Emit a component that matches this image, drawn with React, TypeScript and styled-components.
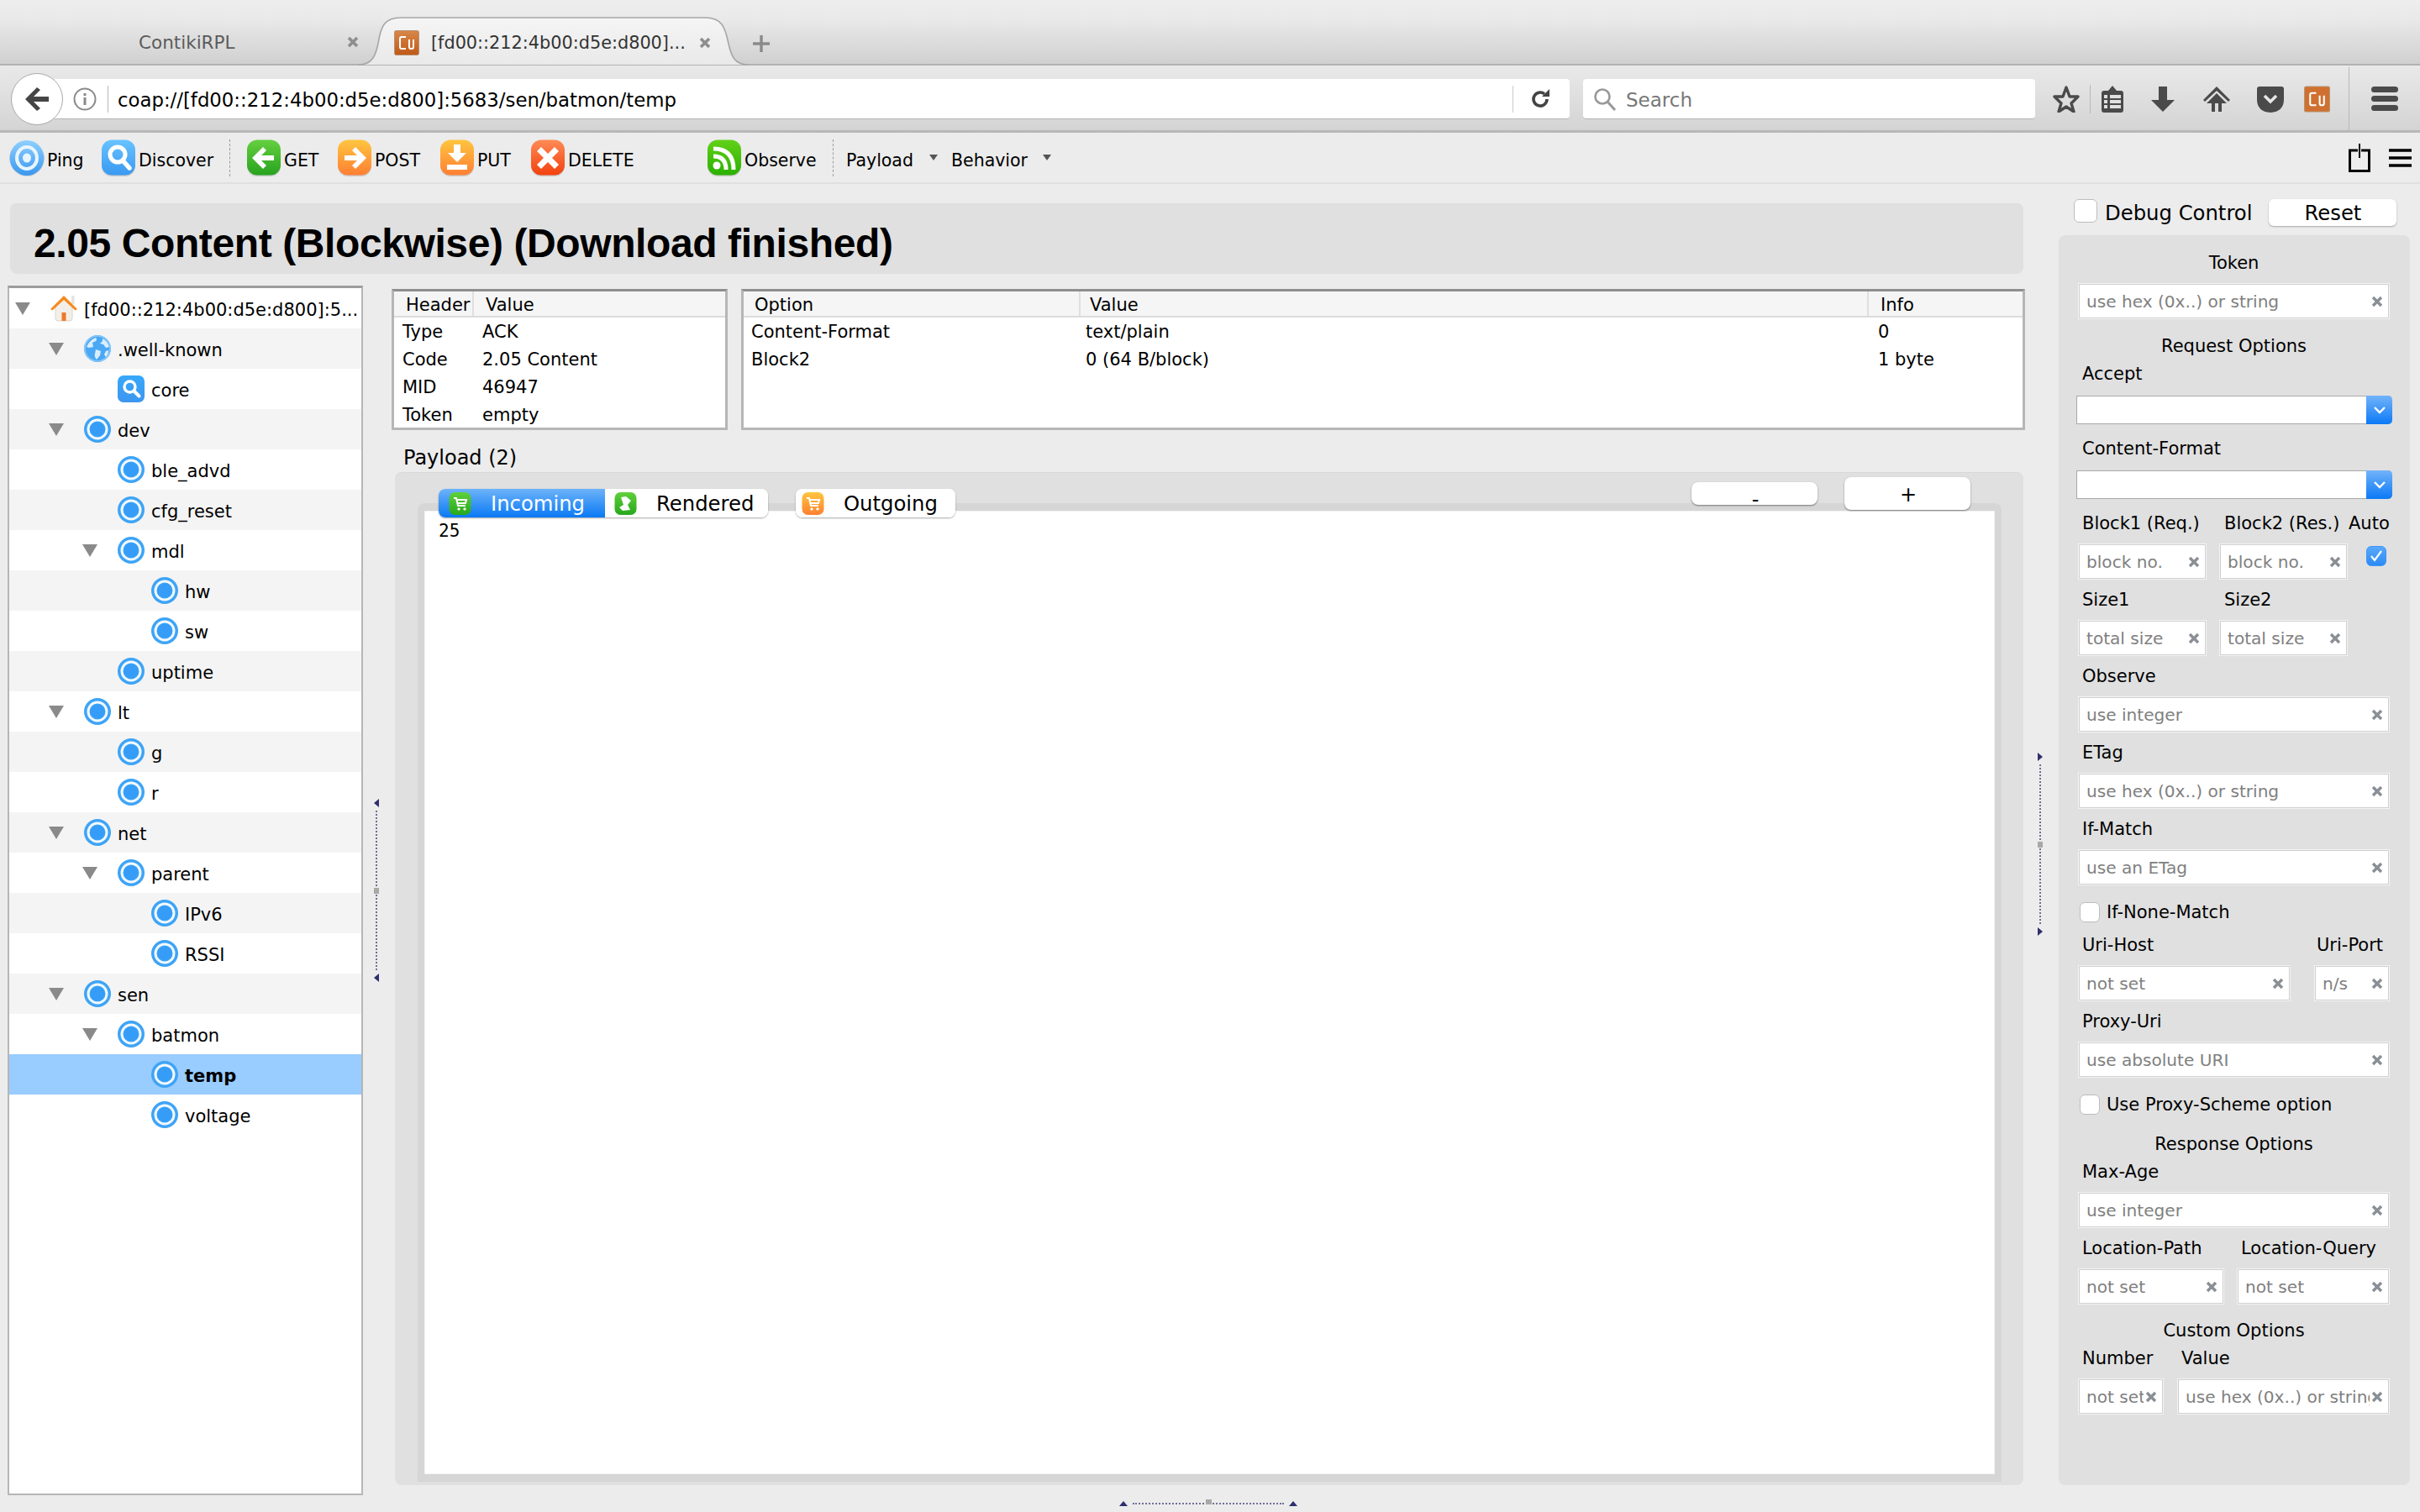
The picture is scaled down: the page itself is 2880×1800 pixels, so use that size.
import React from "react";
import styled, { createGlobalStyle } from "styled-components";

const FONT = `"DejaVu Sans", "Liberation Sans", sans-serif`;

const Global = createGlobalStyle`
  html, body { margin: 0; padding: 0; width: 2880px; height: 1800px; overflow: hidden; background: #ececec; }
  body { font-family: ${FONT}; color: #000; }
  * { box-sizing: border-box; }
`;

const Page = styled.div`
  width: 2880px;
  height: 1800px;
  display: flex;
  flex-direction: column;
  background: #ececec;
`;

/* ---------- browser tab strip ---------- */
const TabBar = styled.div`
  height: 78px;
  flex: none;
  display: flex;
  align-items: flex-end;
  background: linear-gradient(#eeeeee 0%, #e9e9e9 30%, #d0d0d0 100%);
  border-bottom: 2px solid #b2b2b2;
  position: relative;
`;
const InactiveTab = styled.div`
  width: 427px;
  height: 56px;
  display: flex;
  align-items: center;
  padding-left: 165px;
  padding-top: 4px;
  font-size: 21.5px;
  color: #5c5c5c;
`;
const TabClose = styled.svg`
  width: 16px;
  height: 18px;
  flex: none;
`;
const InactiveClose = styled(TabClose)`
  margin-left: auto;
  margin-right: -1px;
`;
const ActiveTab = styled.div`
  width: 463px;
  height: 58px;
  margin-bottom: -2px;
  position: relative;
  display: flex;
  align-items: center;
  padding-left: 42px;
  padding-top: 4px;
  font-size: 20.8px;
  color: #333;
`;
const TabShape = styled.svg`
  position: absolute;
  left: 0;
  top: 0;
`;
const TabTitle = styled.span`
  position: relative;
  margin-left: 14px;
  width: 316px;
  white-space: nowrap;
  overflow: hidden;
`;
const ActiveClose = styled(TabClose)`
  position: relative;
  margin-left: 2px;
`;
const GlyphSvg = styled.svg`
  position: relative;
  flex: none;
  display: block;
`;
const NewTab = styled.svg`
  margin: 0 0 13px 5px;
`;

/* ---------- url bar ---------- */
const NavBar = styled.div`
  height: 80px;
  flex: none;
  display: flex;
  align-items: center;
  padding-left: 13px;
  padding-top: 3px;
  background: linear-gradient(#e9e9e9, #d4d4d4);
  border-bottom: 3px solid #b8b8b8;
  position: relative;
`;
const BackButton = styled.div`
  width: 62px;
  height: 62px;
  flex: none;
  border-radius: 50%;
  background: #fff;
  border: 1.5px solid #a9a9a9;
  display: flex;
  align-items: center;
  justify-content: center;
  position: relative;
  z-index: 1;
`;
const UrlField = styled.div`
  width: 1803px;
  height: 48px;
  margin-left: -10px;
  background: #fff;
  border-bottom: 1px solid #b4b4b4;
  border-radius: 0 4px 4px 0;
  display: flex;
  align-items: center;
  padding-left: 22px;
  font-size: 22.8px;
  color: #000;
`;
const UrlDivider = styled.i`
  width: 1px;
  height: 32px;
  background: #ccc;
  flex: none;
`;
const UrlText = styled.span`
  margin-left: 11px;
  padding-top: 3px;
  white-space: nowrap;
`;
const UrlTail = styled.div`
  margin-left: auto;
  display: flex;
  align-items: center;
  gap: 20px;
  padding-right: 23px;
`;
const SearchField = styled.div`
  width: 538px;
  height: 48px;
  margin-left: 16px;
  background: #fff;
  border-bottom: 1px solid #b4b4b4;
  border-radius: 4px;
  display: flex;
  align-items: center;
  padding-left: 12px;
  font-size: 23px;
  color: #777;
  gap: 11px;
`;
const SearchText = styled.span`
  padding-top: 3px;
`;
const NavIcon = styled.svg<{ $ml: number }>`
  flex: none;
  margin-left: ${(p) => p.$ml}px;
  display: block;
`;
const NavSep = styled.i<{ $ml: number; $h: number }>`
  flex: none;
  width: 1px;
  height: ${(p) => p.$h}px;
  background: #b8b8b8;
  margin-left: ${(p) => p.$ml}px;
`;

/* ---------- app toolbar ---------- */
const Toolbar = styled.div`
  height: 61px;
  flex: none;
  display: flex;
  align-items: center;
  padding: 0 10px 0 11px;
  border-bottom: 2px solid #e0e0e0;
  font-size: 20.5px;
  background: #ececec;
`;
const ToolButton = styled.div<{ $w: number }>`
  width: ${(p) => p.$w}px;
  flex: none;
  display: flex;
  align-items: center;
  gap: 3px;
  white-space: nowrap;
`;
const ToolText = styled.span`
  padding-top: 6px;
`;
const ToolSep = styled.i<{ $mr: number }>`
  flex: none;
  width: 0;
  height: 44px;
  border-left: 1px dashed #9a9a9a;
  margin-right: ${(p) => p.$mr}px;
`;
const MenuButton = styled.div<{ $w: number; $gap: number }>`
  flex: none;
  width: ${(p) => p.$w}px;
  display: flex;
  align-items: center;
  gap: ${(p) => p.$gap}px;
  padding-top: 6px;
`;
const MenuCaret = styled.i`
  width: 0;
  height: 0;
  border-left: 5px solid transparent;
  border-right: 5px solid transparent;
  border-top: 7px solid #555;
  margin-top: -6px;
`;
const ToolbarRight = styled.div`
  margin-left: auto;
  display: flex;
  align-items: center;
  gap: 22px;
`;

/* ---------- body ---------- */
const Body = styled.div`
  flex: 1;
  min-height: 0;
  display: flex;
  padding-left: 9px;
`;
const MainColumn = styled.div`
  width: 2401px;
  flex: none;
  display: flex;
  flex-direction: column;
`;
const Heading = styled.h1`
  margin: 23px 2px 0 3px;
  height: 84px;
  flex: none;
  background: #e0e0e0;
  border-radius: 8px;
  border-top: 1px solid #dcdcdc;
  display: flex;
  align-items: center;
  padding: 10px 0 0 28px;
  font-family: "Liberation Sans", Arial, sans-serif;
  font-weight: 700;
  font-size: 48px;
  letter-spacing: -0.4px;
`;
const WorkRow = styled.div`
  flex: 1;
  min-height: 0;
  display: flex;
  margin-top: 14px;
`;

/* ---------- tree ---------- */
const Tree = styled.div`
  width: 423px;
  flex: none;
  margin-bottom: 20px;
  background: #fff;
  border: 2px solid #b6b6b6;
  border-top: 3px solid #9c9c9c;
`;
const TreeRow = styled.div<{ $depth: number; $shade: boolean; $selected: boolean }>`
  height: 48px;
  display: flex;
  align-items: center;
  padding-left: ${(p) => 7 + p.$depth * 40}px;
  font-size: 21px;
  white-space: nowrap;
  font-weight: ${(p) => (p.$selected ? 700 : 400)};
  background: ${(p) => (p.$selected ? "#99ccff" : p.$shade ? "#f4f4f4" : "#fff")};
`;
const TreeLabel = styled.span`
  padding-top: 3px;
`;
const ArrowSlot = styled.span`
  width: 18px;
  height: 14px;
  flex: none;
  margin-right: 24px;
  display: flex;
`;
const TreeArrow = styled.i`
  width: 0;
  height: 0;
  border-left: 9px solid transparent;
  border-right: 9px solid transparent;
  border-top: 15px solid #8a8a8a;
`;
const TreeIcon = styled.svg`
  flex: none;
  margin-right: 8px;
  display: block;
`;

/* ---------- splitters ---------- */
const VSplitter = styled.div`
  flex: none;
  display: flex;
  flex-direction: column;
  align-items: center;
  justify-content: center;
  gap: 4px;
`;
const TreeSplitter = styled(VSplitter)`
  width: 34px;
  margin-bottom: 20px;
  padding-right: 2px;
`;
const SideSplitter = styled(VSplitter)`
  width: 40px;
  padding-bottom: 9px;
  padding-right: 4px;
`;
const DotsV = styled.i`
  width: 0;
  height: 190px;
  border-left: 2px dotted #6f6f96;
  position: relative;
  &::after {
    content: "";
    position: absolute;
    left: -4px;
    top: 92px;
    width: 6px;
    height: 7px;
    background: #a8a8a8;
  }
`;
const DotsH = styled.i`
  width: 180px;
  height: 0;
  border-top: 2px dotted #6f6f96;
  position: relative;
  &::after {
    content: "";
    position: absolute;
    left: 87px;
    top: -6px;
    width: 7px;
    height: 6px;
    background: #a8a8a8;
  }
`;
const HandleRow = styled.div`
  flex: none;
  height: 12px;
  margin-top: 16px;
  display: flex;
  align-items: center;
  justify-content: center;
  gap: 6px;
`;
const Tri = styled.i<{ $dir: "up" | "left" | "right" }>`
  width: 0;
  height: 0;
  ${(p) =>
    p.$dir === "up"
      ? "border-left:5px solid transparent;border-right:5px solid transparent;border-bottom:6px solid #2f2f6e;"
      : p.$dir === "left"
      ? "border-top:5px solid transparent;border-bottom:5px solid transparent;border-right:6px solid #2f2f6e;"
      : "border-top:5px solid transparent;border-bottom:5px solid transparent;border-left:6px solid #2f2f6e;"}
`;

/* ---------- centre ---------- */
const Center = styled.div`
  flex: 1;
  min-width: 0;
  display: flex;
  flex-direction: column;
  padding-top: 4px;
`;
const TablesRow = styled.div`
  display: flex;
  gap: 16px;
  height: 168px;
  flex: none;
`;
const InfoBox = styled.div<{ $w?: number }>`
  ${(p) => (p.$w ? `width:${p.$w}px;flex:none;` : "flex:1;min-width:0;")}
  background: #fff;
  border: 3px solid #b6b6b6;
  border-top-color: #8e8e8e;
  font-size: 21px;
`;
const InfoHead = styled.div<{ $cols: string }>`
  display: grid;
  grid-template-columns: ${(p) => p.$cols};
  height: 31px;
  background: #f5f5f5;
  border-bottom: 2px solid #dcdcdc;
  align-items: center;
`;
const InfoHeadCell = styled.div<{ $pad: number; $line?: boolean }>`
  height: 100%;
  display: flex;
  align-items: center;
  padding-top: 3px;
  padding-left: ${(p) => p.$pad}px;
  ${(p) => (p.$line ? "border-right: 2px solid #dfdfdf;" : "")}
`;
const InfoRow = styled.div<{ $cols: string; $pad: number }>`
  display: grid;
  grid-template-columns: ${(p) => p.$cols};
  height: 33px;
  align-items: center;
  padding-left: ${(p) => p.$pad}px;
`;
const PayloadLabel = styled.div`
  height: 33px;
  flex: none;
  margin: 16px 0 1px 14px;
  display: flex;
  align-items: center;
  font-size: 24px;
`;
const PayloadPanel = styled.div`
  height: 1206px;
  flex: none;
  margin: 0 2px 0 4px;
  padding: 36px 26px 4px 27px;
  background: #e0e0e0;
  border-top: 1px solid #d8d8d8;
  border-radius: 8px;
  position: relative;
`;
const PayloadWell = styled.div`
  height: 100%;
  padding: 9px 8px;
  background: #d6d6d6;
  border-radius: 8px 8px 0 0;
`;
const PayloadBody = styled.pre`
  margin: 0;
  height: 100%;
  background: #fff;
  border: 1px solid #f2f2f2;
  padding: 11px 16px;
  font-family: "DejaVu Sans Mono", "Liberation Mono", monospace;
  font-size: 21px;
  line-height: 24px;
`;
const TabStrip = styled.div`
  position: absolute;
  left: 52px;
  top: 19px;
  display: flex;
  gap: 33px;
`;
const SegGroup = styled.div`
  display: flex;
  height: 34px;
  border-radius: 8px;
  overflow: hidden;
  box-shadow: 0 1px 2px rgba(0, 0, 0, 0.35);
  background: #fff;
`;
const Seg = styled.div<{ $w: number; $active?: boolean; $iconPad: number }>`
  width: ${(p) => p.$w}px;
  display: flex;
  align-items: center;
  padding-left: ${(p) => p.$iconPad}px;
  gap: 23px;
  font-size: 24.3px;
  color: ${(p) => (p.$active ? "#fff" : "#000")};
  background: ${(p) => (p.$active ? "linear-gradient(#6db3f9, #0a79f5)" : "#fff")};
`;
const ZoomButtons = styled.div`
  position: absolute;
  right: 63px;
  top: 5px;
  display: flex;
  align-items: center;
  gap: 32px;
  height: 39px;
`;
const ZoomButton = styled.div<{ $h: number; $shift: number }>`
  width: 150px;
  height: ${(p) => p.$h}px;
  background: #fff;
  border-radius: 8px;
  box-shadow: 0 1px 2px rgba(0, 0, 0, 0.45);
  display: flex;
  align-items: center;
  justify-content: center;
  padding: ${(p) => p.$shift}px 0 0 2px;
  font-size: 24px;
  line-height: 1;
`;

/* ---------- right side panel ---------- */
const SideColumn = styled.div`
  width: 418px;
  flex: none;
  display: flex;
  flex-direction: column;
`;
const DebugRow = styled.div`
  height: 61px;
  flex: none;
  display: flex;
  align-items: flex-start;
  padding: 18px 0 0 18px;
  font-size: 24.3px;
`;
const DebugLabel = styled.span`
  margin-left: 9px;
  line-height: 33px;
`;
const ResetButton = styled.div`
  width: 152px;
  height: 32px;
  margin-left: 20px;
  padding-top: 1px;
  background: #fff;
  border-radius: 6px;
  box-shadow: 0 1px 2px rgba(0, 0, 0, 0.3);
  display: flex;
  align-items: center;
  justify-content: center;
`;
const Check = styled.div<{ $size: number; $on?: boolean }>`
  width: ${(p) => p.$size}px;
  height: ${(p) => p.$size}px;
  flex: none;
  border-radius: 6px;
  background: ${(p) => (p.$on ? "linear-gradient(#5aa9fb, #2b8af5)" : "#fff")};
  border: 1px solid ${(p) => (p.$on ? "#3f95f5" : "#bdbdbd")};
  display: flex;
  align-items: center;
  justify-content: center;
`;
const SidePanel = styled.div`
  height: 1488px;
  flex: none;
  padding: 16px 25px 0 24px;
  background: #e0e0e0;
  border-radius: 8px;
  font-size: 21px;
`;
const LabelRow = styled.div<{ $cols?: string; $mt: number }>`
  display: grid;
  grid-template-columns: ${(p) => p.$cols || "1fr"};
  height: 33px;
  align-items: center;
  padding-left: 4px;
  margin-top: ${(p) => p.$mt}px;
  white-space: nowrap;
`;
const SectionTitle = styled.div<{ $mt: number }>`
  height: 33px;
  display: flex;
  align-items: center;
  justify-content: center;
  margin-top: ${(p) => p.$mt}px;
`;
const FieldRow = styled.div<{ $cols?: string; $gap?: number }>`
  display: grid;
  grid-template-columns: ${(p) => p.$cols || "1fr"};
  column-gap: ${(p) => p.$gap ?? 0}px;
  margin-top: 9px;
`;
const Field = styled.div`
  height: 41px;
  background: #fff;
  border: 1px solid #cfcfcf;
  box-shadow: 0 0 0 1px #f4f4f4;
  display: flex;
  align-items: center;
  padding: 0 6px 0 8px;
  min-width: 0;
`;
const Placeholder = styled.span`
  flex: 1;
  min-width: 0;
  overflow: hidden;
  white-space: nowrap;
  padding-top: 1px;
  font-size: 20.1px;
  color: #808080;
`;
const ClearIcon = styled.svg`
  flex: none;
  display: block;
  margin-left: 2px;
`;
const SelectBox = styled.div`
  height: 34px;
  margin: 10px -4px 0 -3px;
  background: #fff;
  border: 1px solid #a9a9a9;
  border-right: 0;
  border-radius: 0 5px 5px 0;
  display: flex;
  justify-content: flex-end;
`;
const SelectArrow = styled.div`
  width: 31px;
  margin: -1px 0;
  background: linear-gradient(#72b3fa, #0b79f6);
  border-radius: 0 5px 5px 0;
  display: flex;
  align-items: center;
  justify-content: center;
`;
const CheckRow = styled.div<{ $mt: number }>`
  height: 33px;
  display: flex;
  align-items: center;
  gap: 8px;
  padding-left: 1px;
  margin-top: ${(p) => p.$mt}px;
`;
const AutoCell = styled.div`
  padding: 2px 0 0 6px;
`;

/* ---------- drawings ---------- */
const Clear = () => (
  <ClearIcon width="14" height="14" viewBox="0 0 14 14">
    <path d="M2 2l10 10M12 2L2 12" stroke="#8a8f96" strokeWidth="3.4" />
  </ClearIcon>
);

const CuIcon = () => (
  <GlyphSvg width={30} height={30} viewBox="0 0 30 30">
    <defs>
      <linearGradient id="cuG" x1="0" y1="0" x2="0" y2="1">
        <stop offset="0" stopColor="#d8874a" />
        <stop offset="1" stopColor="#c05a18" />
      </linearGradient>
    </defs>
    <rect x="0.5" y="0.5" width="29" height="29" rx="2" fill="url(#cuG)" stroke="#b8926e" />
    <path d="M14 8h-5q-2 0-2 2v10q0 2 2 2h5" fill="none" stroke="#fff" strokeWidth="2" />
    <path d="M18 11v9q0 2 2 2h1q2 0 2-2v-9" fill="none" stroke="#fff" strokeWidth="2" />
  </GlyphSvg>
);

const glossStops: Record<string, [string, string]> = {
  green: ["#66cf3f", "#27a31f"],
  orange: ["#ffc53f", "#ff7f33"],
  red: ["#ff8b55", "#f2410f"],
  blue: ["#67c3ff", "#3a99f2"],
  rss: ["#62d11a", "#2bb000"],
};

const Glossy = ({ id, tone, children }: { id: string; tone: string; children: React.ReactNode }) => (
  <GlyphSvg width="42" height="44" viewBox="0 0 42 44">
    <defs>
      <linearGradient id={id} x1="0" y1="0" x2="0" y2="1">
        <stop offset="0" stopColor={glossStops[tone][0]} />
        <stop offset="1" stopColor={glossStops[tone][1]} />
      </linearGradient>
    </defs>
    <rect x="1" y="2" width="40" height="42" rx="12" fill="#000" opacity="0.14" />
    <rect x="1" y="0.5" width="40" height="42" rx="12" fill={`url(#${id})`} />
    {children}
  </GlyphSvg>
);

const PingIcon = () => (
  <GlyphSvg width="42" height="44" viewBox="0 0 42 44">
    <defs>
      <linearGradient id="pingG" x1="0" y1="0" x2="0" y2="1">
        <stop offset="0" stopColor="#8fd0ff" />
        <stop offset="1" stopColor="#3a97ee" />
      </linearGradient>
    </defs>
    <ellipse cx="21" cy="23" rx="20.5" ry="21" fill="#000" opacity="0.12" />
    <ellipse cx="21" cy="22" rx="20.5" ry="21" fill="url(#pingG)" />
    <ellipse cx="21" cy="22" rx="12" ry="13" fill="none" stroke="#e8f5ff" strokeWidth="4" />
    <ellipse cx="21" cy="22" rx="5" ry="5.5" fill="#e8f5ff" />
  </GlyphSvg>
);

const ResourceIcon = () => (
  <TreeIcon width="32" height="32" viewBox="0 0 32 32">
    <circle cx="16" cy="16" r="16" fill="#3ea4f6" />
    <circle cx="16" cy="16" r="11" fill="none" stroke="#f2f9ff" strokeWidth="3" />
    <circle cx="16" cy="16" r="8.4" fill="#359df7" />
  </TreeIcon>
);

const HomeIcon = () => (
  <TreeIcon width="32" height="32" viewBox="0 0 32 32">
    <rect x="25" y="1" width="3.5" height="10" fill="#e4e4e4" />
    <path d="M6 14v14q0 3 3 3h14q3 0 3-3V14L16 5z" fill="#f2efe9" stroke="#d9d4cc" />
    <path d="M0 17L16 1l16 16-2.5 1.5L16 6 2.5 18.5z" fill="#f58a1f" />
    <rect x="13.5" y="21" width="5" height="10" fill="#ef7a24" />
  </TreeIcon>
);

const GlobeIcon = () => (
  <TreeIcon width="32" height="32" viewBox="0 0 32 32">
    <circle cx="16" cy="16" r="16" fill="#4aa8f4" />
    <path d="M3 14q3-8 11-11 2 2 0 4l-4 2 1 5-5 1zM14 17l6 2-1 5-4 5q-3-3-2-7zM22 4q6 3 8 10l-4 1-3-4-4-1 3-3zM26 19l3-1q0 5-3 8l-2-3z" fill="#d9eefd" />
    <circle cx="16" cy="16" r="15" fill="none" stroke="#8cc9f8" strokeWidth="1.6" />
  </TreeIcon>
);

const CoreIcon = () => (
  <TreeIcon width="32" height="32" viewBox="0 0 32 32">
    <defs>
      <linearGradient id="coreG" x1="0" y1="0" x2="0" y2="1">
        <stop offset="0" stopColor="#36a8fa" />
        <stop offset="1" stopColor="#3d96f0" />
      </linearGradient>
    </defs>
    <rect width="32" height="32" rx="7" fill="url(#coreG)" />
    <circle cx="14.5" cy="13.5" r="6.5" fill="none" stroke="#fff" strokeWidth="3.4" />
    <path d="M19.5 18.5l6 6" stroke="#fff" strokeWidth="4" strokeLinecap="round" />
  </TreeIcon>
);

const Cart = ({ id, top, bottom, shape }: { id: string; top: string; bottom: string; shape?: "render" }) => (
  <GlyphSvg width="27" height="29" viewBox="0 0 27 29">
    <defs>
      <linearGradient id={id} x1="0" y1="0" x2="0" y2="1">
        <stop offset="0" stopColor={top} />
        <stop offset="1" stopColor={bottom} />
      </linearGradient>
    </defs>
    <rect x="0.5" y="1" width="26" height="27" rx="7" fill={`url(#${id})`} />
    {shape === "render" ? (
      <path d="M8 7l6-1 6 5-4 5 3 6-9 1-4-4 5-3z" fill="#fff" />
    ) : (
      <g fill="none" stroke="#fff">
        <path d="M6 8h3l2 9h9" strokeWidth="2" />
        <path d="M10 10h11l-1 4h-9" strokeWidth="2" />
        <circle cx="12" cy="21" r="1.2" fill="#fff" strokeWidth="1" />
        <circle cx="19" cy="21" r="1.2" fill="#fff" strokeWidth="1" />
      </g>
    )}
  </GlyphSvg>
);

const SelectChevron = () => (
  <svg width="16" height="12" viewBox="0 0 16 12">
    <path d="M2 3l6 6 6-6" fill="none" stroke="#fff" strokeWidth="2.4" />
  </svg>
);

/* ---------- data ---------- */
type Node = { label: string; depth: number; open?: boolean; icon?: "home" | "globe" | "core"; selected?: boolean };
const nodes: Node[] = [
  { label: "[fd00::212:4b00:d5e:d800]:5...", depth: 0, open: true, icon: "home" },
  { label: ".well-known", depth: 1, open: true, icon: "globe" },
  { label: "core", depth: 2, icon: "core" },
  { label: "dev", depth: 1, open: true },
  { label: "ble_advd", depth: 2 },
  { label: "cfg_reset", depth: 2 },
  { label: "mdl", depth: 2, open: true },
  { label: "hw", depth: 3 },
  { label: "sw", depth: 3 },
  { label: "uptime", depth: 2 },
  { label: "lt", depth: 1, open: true },
  { label: "g", depth: 2 },
  { label: "r", depth: 2 },
  { label: "net", depth: 1, open: true },
  { label: "parent", depth: 2, open: true },
  { label: "IPv6", depth: 3 },
  { label: "RSSI", depth: 3 },
  { label: "sen", depth: 1, open: true },
  { label: "batmon", depth: 2, open: true },
  { label: "temp", depth: 3, selected: true },
  { label: "voltage", depth: 3 },
];

const iconFor = (n: Node) =>
  n.icon === "home" ? <HomeIcon /> : n.icon === "globe" ? <GlobeIcon /> : n.icon === "core" ? <CoreIcon /> : <ResourceIcon />;

const InputField = ({ text }: { text: string }) => (
  <Field>
    <Placeholder>{text}</Placeholder>
    <Clear />
  </Field>
);

const headerCols = "95px 1fr";
const optionCols = "398px 943px 1fr";

export default function App() {
  return (
    <Page>
      <Global />
      <TabBar>
        <InactiveTab>
          ContikiRPL
          <InactiveClose viewBox="0 0 16 18">
            <path d="M3 4l10 10M13 4L3 14" stroke="#8e8e8e" strokeWidth="3.6" />
          </InactiveClose>
        </InactiveTab>
        <ActiveTab>
          <TabShape width="463" height="58" viewBox="0 0 463 58">
            <defs>
              <linearGradient id="tabG" x1="0" y1="0" x2="0" y2="1">
                <stop offset="0" stopColor="#f5f5f5" />
                <stop offset="1" stopColor="#e9e9e9" />
              </linearGradient>
            </defs>
            <path
              d="M0 57C16 57 20 46 23 32 26 12 30 1 50 1H412C432 1 436 12 440 32 443 46 447 57 463 57"
              fill="url(#tabG)"
              stroke="#a6a6a6"
              strokeWidth="1.6"
            />
          </TabShape>
          <CuIcon />
          <TabTitle>[fd00::212:4b00:d5e:d800]...</TabTitle>
          <ActiveClose viewBox="0 0 16 18">
            <path d="M3 4l10 10M13 4L3 14" stroke="#8e8e8e" strokeWidth="3.6" />
          </ActiveClose>
        </ActiveTab>
        <NewTab width="22" height="22" viewBox="0 0 22 22">
          <path d="M11 1v20M1 11h20" stroke="#8a8a8a" strokeWidth="3.4" />
        </NewTab>
      </TabBar>

      <NavBar>
        <BackButton>
          <svg width="30" height="30" viewBox="0 0 30 30">
            <path d="M15 1L1 15l14 14 4-3-8-8h18v-6H11l8-8z" fill="#454545" />
          </svg>
        </BackButton>
        <UrlField>
          <svg width="28" height="28" viewBox="0 0 28 28">
            <circle cx="14" cy="14" r="12.5" fill="none" stroke="#8a8a8a" strokeWidth="2" />
            <rect x="12.5" y="12" width="3" height="9" fill="#8a8a8a" />
            <rect x="12.5" y="7" width="3" height="3" fill="#8a8a8a" />
          </svg>
          <NavSep $ml={13} $h={32} />
          <UrlText>coap://[fd00::212:4b00:d5e:d800]:5683/sen/batmon/temp</UrlText>
          <UrlTail>
            <UrlDivider />
            <svg width="24" height="24" viewBox="0 0 24 24">
              <path d="M20 12a8 8 0 1 1-3-6.2" fill="none" stroke="#444" strokeWidth="3.6" />
              <path d="M14 9h9V0z" fill="#444" />
            </svg>
          </UrlTail>
        </UrlField>
        <SearchField>
          <svg width="28" height="28" viewBox="0 0 28 28">
            <circle cx="11" cy="11" r="8.5" fill="none" stroke="#999" strokeWidth="2.6" />
            <path d="M17 17l9 10" stroke="#999" strokeWidth="3" />
          </svg>
          <SearchText>Search</SearchText>
        </SearchField>
        <NavIcon $ml={21} width="32" height="32" viewBox="0 0 32 32">
          <path d="M16 2l4 11h10l-8 8 3 10-9-6-9 6 3-10-8-8h10z" fill="none" stroke="#4a4a4a" strokeWidth="3.4" strokeLinejoin="round" />
        </NavIcon>
        <NavSep $ml={12} $h={34} />
        <NavIcon $ml={12} width="28" height="32" viewBox="0 0 28 32">
          <path d="M14 0l5 6h5q3 0 3 3v20q0 3-3 3H4q-3 0-3-3V9q0-3 3-3h5z" fill="#4a4a4a" />
          <path d="M11 11h13v4H11zM11 17h13v4H11zM11 23h13v4H11z" fill="#e0e0e0" />
          <path d="M4 11h4v4H4zM4 17h4v4H4zM4 23h4v4H4z" fill="#e0e0e0" />
        </NavIcon>
        <NavIcon $ml={31} width="30" height="30" viewBox="0 0 30 30">
          <path d="M10 0h10v16h9L15 30 1 16h9z" fill="#4a4a4a" />
        </NavIcon>
        <NavIcon $ml={33} width="32" height="30" viewBox="0 0 32 30">
          <path d="M16 0L0 16l2 2L16 5l14 13 2-2z" fill="#4a4a4a" />
          <path d="M16 8L4 20h6v10h4V20h4v10h4V20h6z" fill="#4a4a4a" />
        </NavIcon>
        <NavIcon $ml={32} width="32" height="32" viewBox="0 0 32 32">
          <path d="M3 1h26q3 0 3 3v12q0 15-16 16Q0 31 0 16V4q0-3 3-3z" fill="#4a4a4a" />
          <path d="M9 12l7 7 7-7" fill="none" stroke="#e6e6e6" strokeWidth="3.6" />
        </NavIcon>
        <NavIcon $ml={24} width="31" height="32" viewBox="0 0 30 30">
          <rect x="0.5" y="0.5" width="29" height="29" rx="2" fill="#d07030" stroke="#b8926e" />
          <path d="M14 8h-5q-2 0-2 2v10q0 2 2 2h5" fill="none" stroke="#fff" strokeWidth="2" />
          <path d="M18 11v9q0 2 2 2h1q2 0 2-2v-9" fill="none" stroke="#fff" strokeWidth="2" />
        </NavIcon>
        <NavSep $ml={22} $h={76} />
        <NavIcon $ml={26} width="32" height="30" viewBox="0 0 32 30">
          <rect y="0" width="32" height="7" rx="3.5" fill="#4a4a4a" />
          <rect y="11" width="32" height="7" rx="3.5" fill="#4a4a4a" />
          <rect y="22" width="32" height="7" rx="3.5" fill="#4a4a4a" />
        </NavIcon>
      </NavBar>

      <Toolbar>
        <ToolButton $w={109}>
          <PingIcon />
          <ToolText>Ping</ToolText>
        </ToolButton>
        <ToolButton $w={153}>
          <Glossy id="gDisc" tone="blue">
            <circle cx="20" cy="18" r="9" fill="none" stroke="#fff" strokeWidth="5" />
            <path d="M26 25l8 9" stroke="#fff" strokeWidth="5.5" strokeLinecap="round" />
          </Glossy>
          <ToolText>Discover</ToolText>
        </ToolButton>
        <ToolSep $mr={19} />
        <ToolButton $w={108}>
          <Glossy id="gGet" tone="green">
            <path d="M20 9L7 22l13 13 4-4-6-6h15v-6H18l6-6z" fill="#fff" />
          </Glossy>
          <ToolText>GET</ToolText>
        </ToolButton>
        <ToolButton $w={122}>
          <Glossy id="gPost" tone="orange">
            <path d="M22 9l13 13-13 13-4-4 6-6H9v-6h15l-6-6z" fill="#fff" />
          </Glossy>
          <ToolText>POST</ToolText>
        </ToolButton>
        <ToolButton $w={108}>
          <Glossy id="gPut" tone="orange">
            <path d="M17 6h8v10h7L21 27 10 16h7zM9 30h24v6H9z" fill="#fff" />
          </Glossy>
          <ToolText>PUT</ToolText>
        </ToolButton>
        <ToolButton $w={210}>
          <Glossy id="gDel" tone="red">
            <path d="M13 9l8 8 8-8 5 5-8 8 8 8-5 5-8-8-8 8-5-5 8-8-8-8z" fill="#fff" />
          </Glossy>
          <ToolText>DELETE</ToolText>
        </ToolButton>
        <ToolButton $w={150}>
          <Glossy id="gObs" tone="rss">
            <circle cx="12" cy="31" r="4.5" fill="#fff" />
            <path d="M8 20q15 0 15 16M8 11q24 0 24 25" fill="none" stroke="#fff" strokeWidth="5" />
          </Glossy>
          <ToolText>Observe</ToolText>
        </ToolButton>
        <ToolSep $mr={15} />
        <MenuButton $w={125} $gap={19}>
          Payload
          <MenuCaret />
        </MenuButton>
        <MenuButton $w={125} $gap={18}>
          Behavior
          <MenuCaret />
        </MenuButton>
        <ToolbarRight>
          <svg width="26" height="34" viewBox="0 0 26 34">
            <path d="M11 8H1.5v24.5h23V8H15" fill="none" stroke="#000" strokeWidth="3" />
            <path d="M13 0v17" stroke="#000" strokeWidth="2" />
          </svg>
          <svg width="27" height="22" viewBox="0 0 27 22">
            <path d="M0 2h27M0 11h27M0 20h27" stroke="#000" strokeWidth="3.6" />
          </svg>
        </ToolbarRight>
      </Toolbar>

      <Body>
        <MainColumn>
          <Heading>2.05 Content (Blockwise) (Download finished)</Heading>
          <WorkRow>
            <Tree>
              {nodes.map((n, i) => (
                <TreeRow key={n.label} $depth={n.depth} $shade={i % 2 === 1} $selected={!!n.selected}>
                  <ArrowSlot>{n.open && <TreeArrow />}</ArrowSlot>
                  {iconFor(n)}
                  <TreeLabel>{n.label}</TreeLabel>
                </TreeRow>
              ))}
            </Tree>
            <TreeSplitter>
              <Tri $dir="left" />
              <DotsV />
              <Tri $dir="left" />
            </TreeSplitter>
            <Center>
              <TablesRow>
                <InfoBox $w={400}>
                  <InfoHead $cols="95px 1fr">
                    <InfoHeadCell $pad={14} $line>Header</InfoHeadCell>
                    <InfoHeadCell $pad={14}>Value</InfoHeadCell>
                  </InfoHead>
                  <InfoRow $cols={headerCols} $pad={10}><span>Type</span><span>ACK</span></InfoRow>
                  <InfoRow $cols={headerCols} $pad={10}><span>Code</span><span>2.05 Content</span></InfoRow>
                  <InfoRow $cols={headerCols} $pad={10}><span>MID</span><span>46947</span></InfoRow>
                  <InfoRow $cols={headerCols} $pad={10}><span>Token</span><span>empty</span></InfoRow>
                </InfoBox>
                <InfoBox>
                  <InfoHead $cols="401px 938px 1fr">
                    <InfoHeadCell $pad={13} $line>Option</InfoHeadCell>
                    <InfoHeadCell $pad={11} $line>Value</InfoHeadCell>
                    <InfoHeadCell $pad={14}>Info</InfoHeadCell>
                  </InfoHead>
                  <InfoRow $cols={optionCols} $pad={9}><span>Content-Format</span><span>text/plain</span><span>0</span></InfoRow>
                  <InfoRow $cols={optionCols} $pad={9}><span>Block2</span><span>0 (64 B/block)</span><span>1 byte</span></InfoRow>
                </InfoBox>
              </TablesRow>
              <PayloadLabel>Payload (2)</PayloadLabel>
              <PayloadPanel>
                <PayloadWell>
                  <PayloadBody>25</PayloadBody>
                </PayloadWell>
                <TabStrip>
                  <SegGroup>
                    <Seg $w={198} $active $iconPad={12}>
                      <Cart id="cartIn" top="#5fd03a" bottom="#27a81d" />
                      Incoming
                    </Seg>
                    <Seg $w={194} $iconPad={11}>
                      <Cart id="cartRe" top="#5fd03a" bottom="#27a81d" shape="render" />
                      Rendered
                    </Seg>
                  </SegGroup>
                  <SegGroup>
                    <Seg $w={190} $iconPad={7}>
                      <Cart id="cartOut" top="#ffc53f" bottom="#ff8030" />
                      Outgoing
                    </Seg>
                  </SegGroup>
                </TabStrip>
                <ZoomButtons>
                  <ZoomButton $h={27} $shift={14}>-</ZoomButton>
                  <ZoomButton $h={39} $shift={2}>+</ZoomButton>
                </ZoomButtons>
              </PayloadPanel>
              <HandleRow>
                <Tri $dir="up" />
                <DotsH />
                <Tri $dir="up" />
              </HandleRow>
            </Center>
          </WorkRow>
        </MainColumn>

        <SideSplitter>
          <Tri $dir="right" />
          <DotsV />
          <Tri $dir="right" />
        </SideSplitter>

        <SideColumn>
          <DebugRow>
            <Check $size={28} />
            <DebugLabel>Debug Control</DebugLabel>
            <ResetButton>Reset</ResetButton>
          </DebugRow>
          <SidePanel>
            <SectionTitle $mt={0}>Token</SectionTitle>
            <FieldRow><InputField text="use hex (0x..) or string" /></FieldRow>
            <SectionTitle $mt={16}>Request Options</SectionTitle>
            <LabelRow $mt={0}>Accept</LabelRow>
            <SelectBox><SelectArrow><SelectChevron /></SelectArrow></SelectBox>
            <LabelRow $mt={12}>Content-Format</LabelRow>
            <SelectBox><SelectArrow><SelectChevron /></SelectArrow></SelectBox>
            <LabelRow $mt={12} $cols="169px 148px 1fr">
              <span>Block1 (Req.)</span><span>Block2 (Res.)</span><span>Auto</span>
            </LabelRow>
            <FieldRow $cols="151px 151px 1fr" $gap={17}>
              <InputField text="block no." />
              <InputField text="block no." />
              <AutoCell>
                <Check $size={24} $on>
                  <svg width="16" height="14" viewBox="0 0 16 14">
                    <path d="M2 7l4 5 8-11" fill="none" stroke="#fff" strokeWidth="2.2" />
                  </svg>
                </Check>
              </AutoCell>
            </FieldRow>
            <LabelRow $mt={8} $cols="169px 1fr"><span>Size1</span><span>Size2</span></LabelRow>
            <FieldRow $cols="151px 151px 1fr" $gap={17}>
              <InputField text="total size" />
              <InputField text="total size" />
            </FieldRow>
            <LabelRow $mt={8}>Observe</LabelRow>
            <FieldRow><InputField text="use integer" /></FieldRow>
            <LabelRow $mt={8}>ETag</LabelRow>
            <FieldRow><InputField text="use hex (0x..) or string" /></FieldRow>
            <LabelRow $mt={8}>If-Match</LabelRow>
            <FieldRow><InputField text="use an ETag" /></FieldRow>
            <CheckRow $mt={16}><Check $size={24} />If-None-Match</CheckRow>
            <LabelRow $mt={6} $cols="279px 1fr"><span>Uri-Host</span><span>Uri-Port</span></LabelRow>
            <FieldRow $cols="251px 88px" $gap={30}>
              <InputField text="not set" />
              <InputField text="n/s" />
            </FieldRow>
            <LabelRow $mt={8}>Proxy-Uri</LabelRow>
            <FieldRow><InputField text="use absolute URI" /></FieldRow>
            <CheckRow $mt={16}><Check $size={24} />Use Proxy-Scheme option</CheckRow>
            <SectionTitle $mt={14}>Response Options</SectionTitle>
            <LabelRow $mt={0}>Max-Age</LabelRow>
            <FieldRow><InputField text="use integer" /></FieldRow>
            <LabelRow $mt={8} $cols="189px 1fr"><span>Location-Path</span><span>Location-Query</span></LabelRow>
            <FieldRow $cols="172px 180px" $gap={17}>
              <InputField text="not set" />
              <InputField text="not set" />
            </FieldRow>
            <SectionTitle $mt={15}>Custom Options</SectionTitle>
            <LabelRow $mt={0} $cols="118px 1fr"><span>Number</span><span>Value</span></LabelRow>
            <FieldRow $cols="100px 251px" $gap={18}>
              <InputField text="not set" />
              <InputField text="use hex (0x..) or string" />
            </FieldRow>
          </SidePanel>
        </SideColumn>
      </Body>
    </Page>
  );
}
